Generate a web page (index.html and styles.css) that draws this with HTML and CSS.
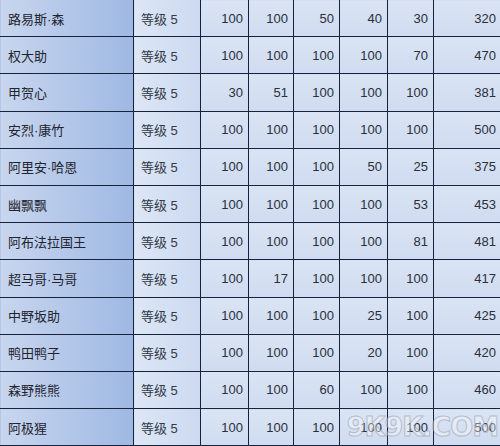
FILE: index.html
```html
<!DOCTYPE html>
<html lang="zh">
<head>
<meta charset="utf-8">
<link rel="stylesheet" href="styles.css">
</head>
<body>
<div class="wrap">
<table class="stats">
<colgroup>
<col class="c-name"><col class="c-lv"><col class="c-n1"><col class="c-n2"><col class="c-n3"><col class="c-n4"><col class="c-n5"><col class="c-sum">
</colgroup>
<tbody>
<tr><td class="name">路易斯·森</td><td class="lv">等级 5</td><td>100</td><td>100</td><td>50</td><td>40</td><td>30</td><td>320</td></tr>
<tr><td class="name">权大助</td><td class="lv">等级 5</td><td>100</td><td>100</td><td>100</td><td>100</td><td>70</td><td>470</td></tr>
<tr><td class="name">甲贺心</td><td class="lv">等级 5</td><td>30</td><td>51</td><td>100</td><td>100</td><td>100</td><td>381</td></tr>
<tr><td class="name">安烈·康竹</td><td class="lv">等级 5</td><td>100</td><td>100</td><td>100</td><td>100</td><td>100</td><td>500</td></tr>
<tr><td class="name">阿里安·哈恩</td><td class="lv">等级 5</td><td>100</td><td>100</td><td>100</td><td>50</td><td>25</td><td>375</td></tr>
<tr><td class="name">幽飘飘</td><td class="lv">等级 5</td><td>100</td><td>100</td><td>100</td><td>100</td><td>53</td><td>453</td></tr>
<tr><td class="name">阿布法拉国王</td><td class="lv">等级 5</td><td>100</td><td>100</td><td>100</td><td>100</td><td>81</td><td>481</td></tr>
<tr><td class="name">超马哥·马哥</td><td class="lv">等级 5</td><td>100</td><td>17</td><td>100</td><td>100</td><td>100</td><td>417</td></tr>
<tr><td class="name">中野坂助</td><td class="lv">等级 5</td><td>100</td><td>100</td><td>100</td><td>25</td><td>100</td><td>425</td></tr>
<tr><td class="name">鸭田鸭子</td><td class="lv">等级 5</td><td>100</td><td>100</td><td>100</td><td>20</td><td>100</td><td>420</td></tr>
<tr><td class="name">森野熊熊</td><td class="lv">等级 5</td><td>100</td><td>100</td><td>60</td><td>100</td><td>100</td><td>460</td></tr>
<tr><td class="name">阿极猩</td><td class="lv">等级 5</td><td>100</td><td>100</td><td>100</td><td>100</td><td>100</td><td>500</td></tr>
</tbody>
</table>
<div class="watermark">9K9K.COM</div>
</div>
</body>
</html>
```
FILE: styles.css
```css
html, body {
  margin: 0;
  padding: 0;
  background: #d3def1;
}
.wrap {
  position: relative;
  width: 500px;
  height: 446px;
  overflow: hidden;
}
.stats {
  border-collapse: collapse;
  table-layout: fixed;
  width: 502px;
  margin-top: -1px;
  margin-left: -1px;
  font-family: "Liberation Sans", "Noto Sans CJK SC", sans-serif;
  font-size: 13px;
  color: #2a2f3a;
}
.c-name { width: 134px; }
.c-lv { width: 67px; }
.c-n1 { width: 48px; }
.c-n2 { width: 45px; }
.c-n3 { width: 46px; }
.c-n4 { width: 48px; }
.c-n5 { width: 46px; }
.c-sum { width: 68px; }
.stats td {
  height: 36.2px;
  padding: 0 5px 0 4px;
  border: 1px solid #17233d;
  text-align: right;
  background: linear-gradient(to bottom, #dae4f4, #cfdbf0);
  white-space: nowrap;
}
.stats td.name {
  text-align: left;
  padding-left: 8px;
  background: linear-gradient(to right, #c8d6ee, #9fb8e3);
  font-family: "Liberation Sans", "Noto Sans CJK SC", sans-serif;
  color: #1f2430;
}
.stats td.lv {
  text-align: left;
  padding-left: 7px;
  background: linear-gradient(to right, #dce6f6, #ccd9f0);
  color: #333a48;
}
.watermark {
  position: absolute;
  right: 2px;
  bottom: 6px;
  font-family: "DejaVu Sans", sans-serif;
  font-weight: bold;
  font-size: 27px;
  letter-spacing: -1px;
  line-height: 1;
  color: rgba(255, 255, 255, 0.4);
  -webkit-text-stroke: 1px rgba(140, 145, 155, 0.5);
  pointer-events: none;
}
```
